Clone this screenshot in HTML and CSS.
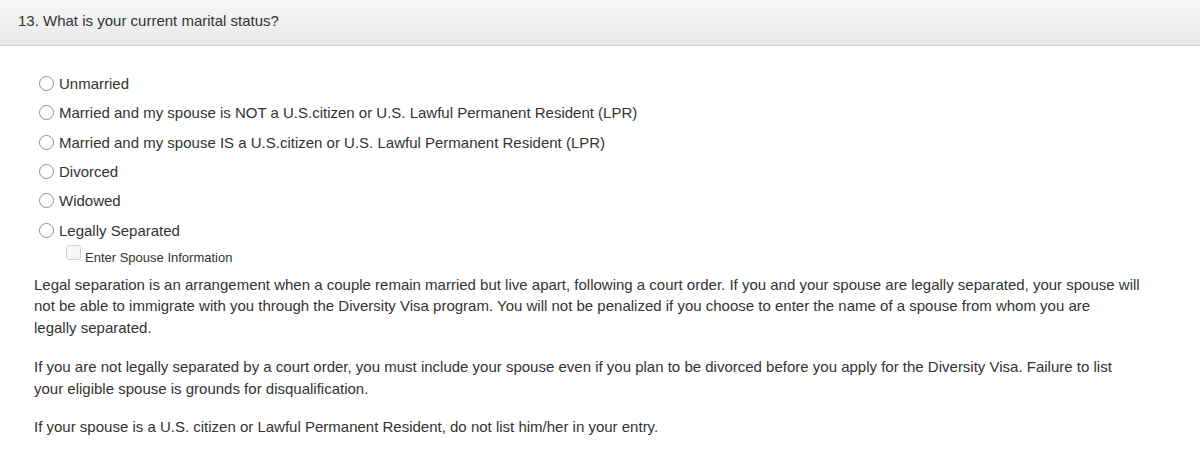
FILE: index.html
```html
<!DOCTYPE html>
<html lang="en">
<head>
    <meta charset="UTF-8">
    <meta name="viewport" content="width=device-width, initial-scale=1.0">
    <title>Marital Status</title>
    <link rel="stylesheet" href="styles.css">
</head>
<body>
    <div class="question-header">
        <h2>13. What is your current marital status?</h2>
    </div>

    <main class="question-body">
        <div class="options">
            <label class="option"><input type="radio" name="marital"> Unmarried</label>
            <label class="option"><input type="radio" name="marital"> Married and my spouse is NOT a U.S.citizen or U.S. Lawful Permanent Resident (LPR)</label>
            <label class="option"><input type="radio" name="marital"> Married and my spouse IS a U.S.citizen or U.S. Lawful Permanent Resident (LPR)</label>
            <label class="option"><input type="radio" name="marital"> Divorced</label>
            <label class="option"><input type="radio" name="marital"> Widowed</label>
            <label class="option"><input type="radio" name="marital"> Legally Separated</label>
            <label class="sub-option"><input type="checkbox" disabled> <span>Enter Spouse Information</span></label>
        </div>

        <div class="notes">
            <p>Legal separation is an arrangement when a couple remain married but live apart, following a court order. If you and your spouse are legally separated, your spouse will not be able to immigrate with you through the Diversity Visa program. You will not be penalized if you choose to enter the name of a spouse from whom you are legally&nbsp;separated.</p>
            <p>If you are not legally separated by a court order, you must include your spouse even if you plan to be divorced before you apply for the Diversity Visa. Failure to list your&nbsp;eligible spouse is grounds for disqualification.</p>
            <p>If your spouse is a U.S. citizen or Lawful Permanent Resident, do not list him/her in your entry.</p>
        </div>
    </main>
</body>
</html>
```

FILE: styles.css
```css
body, h2, p {
    margin: 0;
    padding: 0;
}
body {
    font-family: 'Liberation Sans', Arial, sans-serif;
    font-size: 15px;
    color: #333333;
    background-color: #ffffff;
}
.question-header {
    height: 45px;
    background: linear-gradient(to bottom, #f6f6f6, #e9e9e9);
    border-bottom: 1px solid #d6d6d6;
    display: flex;
    align-items: center;
    padding: 0 18px;
}
.question-header h2 {
    font-size: 15px;
    font-weight: normal;
    color: #333333;
    margin-top: -4px;
}
.question-body {
    padding: 23px 50px 0 34px;
}
.options {
    display: flex;
    flex-direction: column;
}
.option {
    height: 29.3px;
    display: flex;
    align-items: center;
    padding-left: 5px;
}
.option input {
    appearance: none;
    -webkit-appearance: none;
    width: 15px;
    height: 15px;
    margin: 0 5px 0 0;
    border: 1px solid #8f8f8f;
    border-radius: 50%;
    background-color: #ffffff;
}
.sub-option {
    height: 20px;
    display: flex;
    align-items: flex-end;
    padding-left: 32px;
    font-size: 13px;
    line-height: 15px;
}
.sub-option input {
    appearance: none;
    -webkit-appearance: none;
    align-self: flex-start;
    width: 15px;
    height: 15px;
    margin: 0 4px 0 0;
    border: 1px solid #d4d4d4;
    border-radius: 3px;
    background-color: #f7f7f7;
}
.notes {
    margin-top: 9px;
}
.notes p {
    line-height: 21.5px;
    margin-bottom: 18px;
}
.notes p + p + p {
    margin-top: -1px;
}
```
